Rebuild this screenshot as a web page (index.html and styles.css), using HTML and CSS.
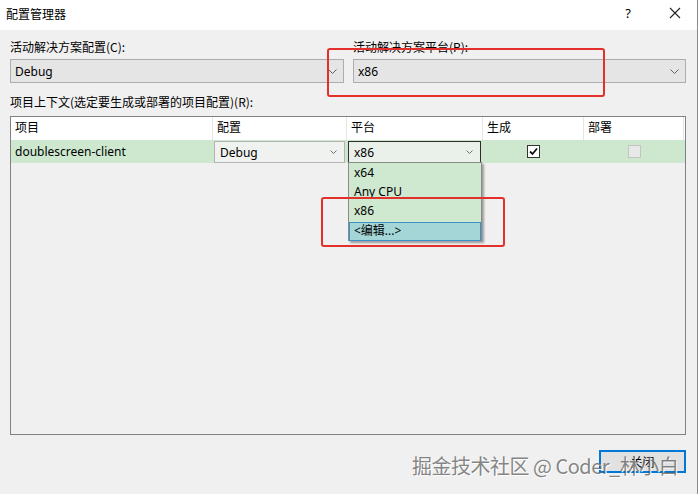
FILE: index.html
```html
<!DOCTYPE html>
<html lang="zh">
<head>
<meta charset="utf-8">
<title>配置管理器</title>
<link rel="stylesheet" href="styles.css">
</head>
<body>
<div class="window">
  <div class="titlebar">
    <span class="title">配置管理器</span>
    <span class="help">?</span>
    <span class="close-x"><svg width="12" height="12" viewBox="0 0 12 12"><path d="M1 1 L11 11 M11 1 L1 11" stroke="#222" stroke-width="1.1" fill="none"/></svg></span>
  </div>
  <div class="content">
    <div class="top-row">
      <div class="field">
        <div class="label">活动解决方案配置(C):</div>
        <div class="combo big"><span>Debug</span><svg class="chev" width="9" height="5" viewBox="0 0 9 5"><path d="M0.5 0.5 L4.5 4.5 L8.5 0.5" stroke="#606060" fill="none"/></svg></div>
      </div>
      <div class="field">
        <div class="label">活动解决方案平台(P):</div>
        <div class="combo big"><span>x86</span><svg class="chev" width="9" height="5" viewBox="0 0 9 5"><path d="M0.5 0.5 L4.5 4.5 L8.5 0.5" stroke="#606060" fill="none"/></svg></div>
      </div>
    </div>
    <div class="label ctx">项目上下文(选定要生成或部署的项目配置)(R):</div>
    <div class="grid">
      <div class="row head">
        <div class="cell">项目</div>
        <div class="cell">配置</div>
        <div class="cell">平台</div>
        <div class="cell">生成</div>
        <div class="cell">部署</div>
      </div>
      <div class="row data">
        <div class="cell name">doublescreen-client</div>
        <div class="cell pad"><div class="combo small"><span>Debug</span><svg class="chev" width="7" height="4" viewBox="0 0 7 4"><path d="M0.5 0.5 L3.5 3.5 L6.5 0.5" stroke="#707070" fill="none"/></svg></div></div>
        <div class="cell pad platform">
          <div class="combo small focus"><span>x86</span><svg class="chev" width="7" height="4" viewBox="0 0 7 4"><path d="M0.5 0.5 L3.5 3.5 L6.5 0.5" stroke="#707070" fill="none"/></svg></div>
          <div class="dropdown">
            <div class="item">x64</div>
            <div class="item">Any CPU</div>
            <div class="item">x86</div>
            <div class="item sel">&lt;编辑...&gt;</div>
          </div>
        </div>
        <div class="cell center"><span class="check on"><svg width="11" height="11" viewBox="0 0 11 11"><path d="M2 5.5 L4.5 8 L9 2.5" stroke="#111" stroke-width="1.8" fill="none"/></svg></span></div>
        <div class="cell center"><span class="check off"></span></div>
      </div>
    </div>
    <div class="footer">
      <button class="btn">关闭</button>
    </div>
  </div>
  <div class="mark mark1"></div>
  <div class="mark mark2"></div>
  <div class="watermark">掘金技术社区 @ Coder_林小白</div>
</div>
</body>
</html>
```
FILE: styles.css
```css
* { box-sizing: border-box; }
html, body { margin: 0; padding: 0; background: #ffffff; }
body {
  font-family: "Noto Sans", "Noto Sans CJK SC", sans-serif;
  font-size: 12px;
  color: #000;
}
.window {
  position: relative;
  width: 698px;
  height: 494px;
  background: #f0f0f0;
  border-right: 1px solid #8a8a8a;
  overflow: hidden;
}
.titlebar {
  height: 30px;
  background: #ffffff;
  display: flex;
  align-items: center;
  padding-left: 6px;
}
.title { font-size: 12px; flex: 1; margin-top: -4px; font-family: "Noto Sans CJK SC", sans-serif; }
.help { width: 46px; text-align: center; font-size: 13px; margin-top: -4px; margin-right: 0; }
.close-x { width: 46px; display: flex; justify-content: center; margin-top: -4px; padding-left: 2px; }
.content { padding: 8px 11px 0 10px; display: flex; flex-direction: column; }
.top-row { display: flex; gap: 9px; }
.field { width: 334px; }
.field + .field { width: 333px; }
.label { height: 21px; line-height: 17px; font-family: "Noto Sans CJK SC", sans-serif; }
.combo {
  display: flex; align-items: center; justify-content: space-between;
  border: 1px solid #adadad;
  background: #e5e5e5;
}
.combo.big { height: 24px; padding: 0 4px 0 4px; }
.combo.big .chev { margin-right: 2px; }
.ctx { margin-top: 10px; height: 23px; line-height: 18px; }
.grid {
  border: 1px solid #828282;
  height: 319px;
  background: #f0f0f0;
}
.row { display: grid; grid-template-columns: 202px 134px 136px 101px 100px; }
.head { height: 23px; background: #ffffff; }
.head .cell {
  border-right: 1px solid #e5e5e5;
  padding-left: 4px; line-height: 20px;
  font-family: "Noto Sans CJK SC", sans-serif;
}
.data { height: 23px; background: #cde8cf; }
.data .cell { display: flex; align-items: center; }
.name { padding-left: 4px; }
.pad { padding: 1px 2px 0 1px; }
.platform { position: relative; }
.combo.small {
  width: 100%; height: 22px; padding: 0 7px 0 5px;
  background: #f0f2f0;
  border-color: #b4b4b4;
}
.combo.focus { border-color: #2e2e2e; background: #eaf1ea; }
.center { justify-content: center; }
.check { width: 13px; height: 13px; display: flex; align-items: center; justify-content: center; }
.check.on { border: 1px solid #333; background: #fff; }
.check.off { border: 1px solid #c4c4c4; background: #e8e8e8; }
.dropdown {
  position: absolute; left: 1px; top: 22px;
  width: 134px; height: 79px;
  background: #cfe8d0;
  border: 1px solid #8a8a8a;
  box-shadow: 2px 2px 2px rgba(0,0,0,0.35);
  padding-top: 1px;
  z-index: 2;
}
.item { height: 19px; line-height: 18px; padding-left: 5px; }
.item.sel {
  background: #a4d6d8; border: 1px solid #3f8fc8;
  line-height: 16px; padding-left: 4px; height: 19px; margin-top: 1px;
  font-family: "Noto Sans", "Noto Sans CJK SC", sans-serif;
}
.footer { display: flex; justify-content: flex-end; padding-top: 15px; }
.btn {
  width: 87px; height: 23px;
  background: #e1e1e1;
  border: 2px solid #0078d7;
  font-family: "Noto Sans CJK SC", sans-serif;
  font-size: 12px;
  padding: 0;
}
.mark {
  position: absolute;
  border: 2.5px solid #e3302b;
  border-radius: 3px;
  z-index: 3;
}
.mark1 { left: 327px; top: 48px; width: 278px; height: 49px; }
.mark2 { left: 321px; top: 197px; width: 184px; height: 50px; }
.watermark {
  position: absolute; left: 412px; top: 452px;
  font-family: "Noto Sans CJK SC", sans-serif;
  font-size: 20px; line-height: 28px;
  color: rgba(95,95,95,0.75);
  text-shadow: 1px 1px 0 rgba(255,255,255,0.9);
  letter-spacing: -0.5px;
  z-index: 4;
  white-space: nowrap;
}
```
